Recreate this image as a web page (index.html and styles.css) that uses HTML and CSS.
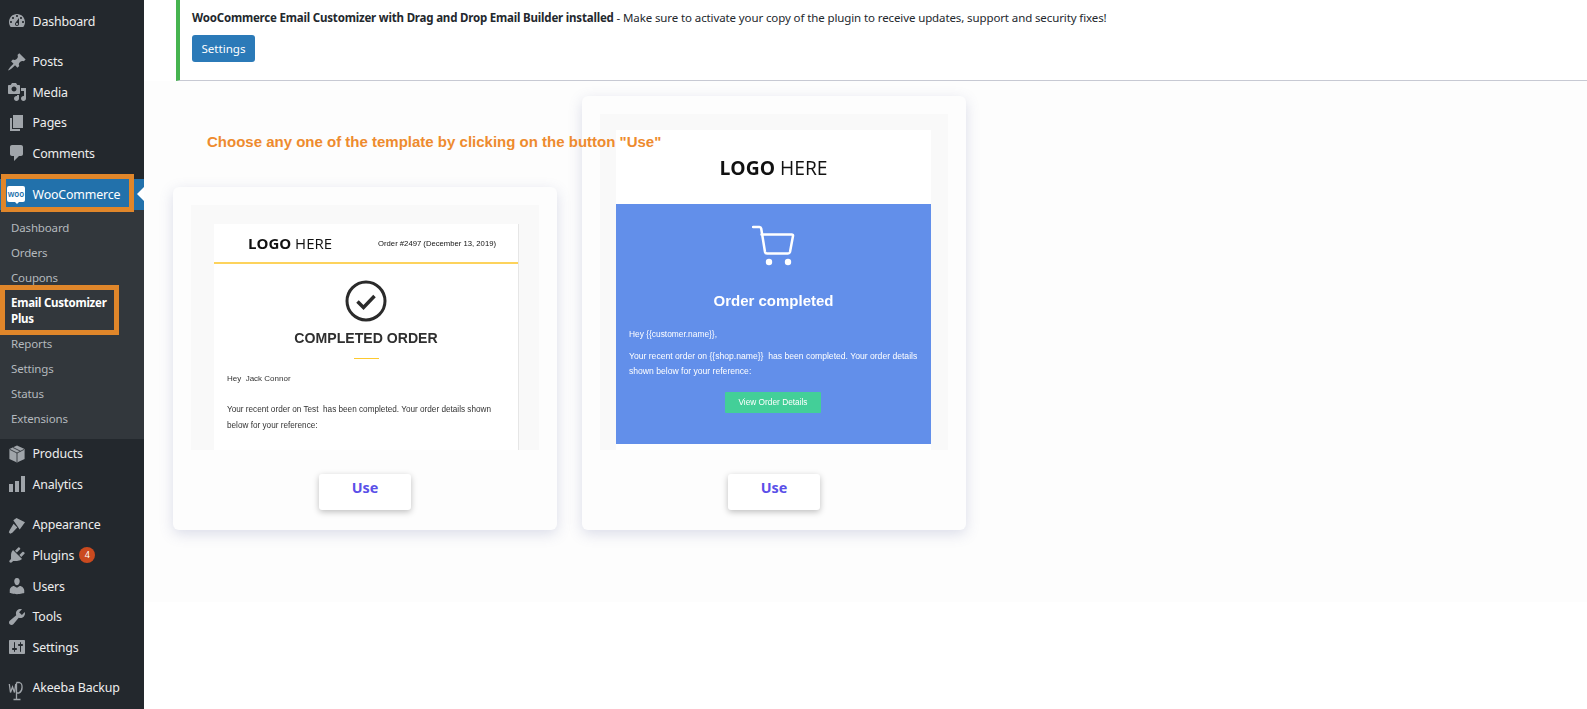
FILE: index.html
```html
<!DOCTYPE html>
<html lang="en">
<head>
    <meta charset="UTF-8">
    <meta name="viewport" content="width=device-width, initial-scale=1.0">
    <title>Email Customizer Plus</title>
    <link rel="stylesheet" href="styles.css">
</head>
<body>
    <div class="page">
        <!-- Admin sidebar -->
        <nav class="sidebar">
            <a class="menu-item"><svg class="icon" viewBox="0 0 20 20"><path d="M3.76 16h12.48c1.1-1.37 1.76-3.11 1.76-5 0-4.42-3.58-8-8-8s-8 3.58-8 8c0 1.89.66 3.63 1.76 5zM10 4c.55 0 1 .45 1 1s-.45 1-1 1-1-.45-1-1 .45-1 1-1zM6 6c.55 0 1 .45 1 1s-.45 1-1 1-1-.45-1-1 .45-1 1-1zm8 0c.55 0 1 .45 1 1s-.45 1-1 1-1-.45-1-1 .45-1 1-1zm-5.37 5.55L12 7v6c0 1.1-.9 2-2 2s-2-.9-2-2c0-.57.24-1.08.63-1.45zM4 10c.55 0 1 .45 1 1s-.45 1-1 1-1-.45-1-1 .45-1 1-1zm12 0c.55 0 1 .45 1 1s-.45 1-1 1-1-.45-1-1 .45-1 1-1zm-5 3c0-.55-.45-1-1-1s-1 .45-1 1 .45 1 1 1 1-.45 1-1z"/></svg>Dashboard</a>

            <a class="menu-item sep"><svg class="icon" viewBox="0 0 20 20"><path d="M10.44 3.02l1.82-1.82 6.36 6.35-1.83 1.82c-1.05-.68-2.48-.57-3.41.36l-.75.75c-.92.93-1.04 2.35-.35 3.41l-1.83 1.82-2.41-2.41-2.8 2.79c-.42.42-3.38 2.71-3.8 2.29s1.86-3.39 2.28-3.81l2.79-2.79L4.1 9.36l1.83-1.82c1.05.69 2.48.57 3.4-.36l.75-.75c.93-.92 1.05-2.35.36-3.41z"/></svg>Posts</a>
            <a class="menu-item"><svg class="icon" viewBox="0 0 20 20"><path d="M13 11V4c0-.55-.45-1-1-1h-1.67L9 1H5L3.67 3H2c-.55 0-1 .45-1 1v7c0 .55.45 1 1 1h10c.55 0 1-.45 1-1zM7 4.5c1.38 0 2.5 1.12 2.5 2.5S8.38 9.5 7 9.5 4.5 8.38 4.5 7 5.62 4.5 7 4.5zM14 6h5v10.5c0 1.38-1.12 2.5-2.5 2.5S14 17.88 14 16.5s1.12-2.5 2.5-2.5c.17 0 .34.02.5.05V9h-3V6zm-4 8.05V13h2v3.5c0 1.38-1.12 2.5-2.5 2.5S7 17.88 7 16.5 8.12 14 9.5 14c.17 0 .34.02.5.05z"/></svg>Media</a>
            <a class="menu-item"><svg class="icon" viewBox="0 0 20 20"><path d="M6 15V2h10v13H6zm-1 1h8v2H3V5h2v11z"/></svg>Pages</a>
            <a class="menu-item"><svg class="icon" viewBox="0 0 20 20"><path d="M5 2h9c1.1 0 2 .9 2 2v7c0 1.1-.9 2-2 2h-2l-5 5v-5H5c-1.1 0-2-.9-2-2V4c0-1.1.9-2 2-2z"/></svg>Comments</a>

            <a class="menu-item sep current">
                <span class="woo-icon">woo</span>WooCommerce
                <span class="mark mark-woo"></span>
                <span class="current-arrow"></span>
            </a>
            <div class="submenu">
                <a class="sub-item">Dashboard</a>
                <a class="sub-item">Orders</a>
                <a class="sub-item">Coupons</a>
                <a class="sub-item sub-active">Email Customizer Plus<span class="mark mark-email"></span></a>
                <a class="sub-item">Reports</a>
                <a class="sub-item">Settings</a>
                <a class="sub-item">Status</a>
                <a class="sub-item">Extensions</a>
            </div>

            <a class="menu-item"><svg class="icon" viewBox="0 0 20 20"><path d="M10 1.5l7.6 3.6v9.8L10 18.5l-7.6-3.6V5.1z"/><path class="icon-cut" d="M2.8 5.4L10 9l7.2-3.6M10 9v9M6 3.5l7.4 3.7"/></svg>Products</a>
            <a class="menu-item"><svg class="icon" viewBox="0 0 20 20"><path d="M18 18V2h-4v16h4zm-6 0V7H8v11h4zm-6 0v-8H2v8h4z"/></svg>Analytics</a>

            <a class="menu-item sep"><svg class="icon" viewBox="0 0 20 20"><path d="M6.3 5.2L9.5 3 18 7.300l-5.300 7.200zM6.600 8.800l3.700 3.700-5 5.200-2.100 1-1.400-1.400 1-2.200z"/></svg>Appearance</a>
            <a class="menu-item"><svg class="icon" viewBox="0 0 20 20"><path d="M13.11 4.36L9.87 7.6 8 5.73l3.24-3.24c.35-.34 1.05-.2 1.56.32.52.51.66 1.21.31 1.55zm-8 1.77l.91-1.12 9.01 9.01-1.19.84c-.71.71-2.63 1.16-3.82 1.16H6.14L4.9 17.26c-.59.59-1.54.59-2.12 0-.59-.58-.59-1.53 0-2.12l1.24-1.24v-3.88c0-1.13.4-3.07 1.09-3.89zm7.26 3.97l3.24-3.24c.34-.35 1.04-.21 1.55.31.52.51.66 1.21.31 1.55l-3.24 3.25z"/></svg>Plugins<span class="badge">4</span></a>
            <a class="menu-item"><svg class="icon" viewBox="0 0 20 20"><path d="M10 9.25c-2.27 0-2.73-3.44-2.73-3.44C7 4.02 7.82 2 9.97 2c2.16 0 2.98 2.02 2.71 3.81 0 0-.41 3.44-2.68 3.44zm0 2.57L12.72 10c2.39 0 4.52 2.33 4.52 4.53v2.49s-3.65 1.13-7.24 1.13c-3.65 0-7.24-1.13-7.24-1.13v-2.49c0-2.25 1.94-4.48 4.15-4.48z"/></svg>Users</a>
            <a class="menu-item"><svg class="icon" viewBox="0 0 20 20"><path d="M16.68 9.77c-1.34 1.34-3.3 1.67-4.95.99l-5.41 6.52c-.99.99-2.59.99-3.57 0-.99-.98-.99-2.58 0-3.57l6.52-5.42c-.68-1.65-.35-3.61.99-4.95 1.28-1.28 3.12-1.62 4.72-1.06l-2.89 2.89 2.82 2.82 2.86-2.87c.53 1.58.18 3.4-1.09 4.65z"/></svg>Tools</a>
            <a class="menu-item"><svg class="icon" viewBox="0 0 20 20"><path d="M18 16V4c0-.55-.45-1-1-1H3c-.55 0-1 .45-1 1v12c0 .55.45 1 1 1h14c.55 0 1-.45 1-1zM8 11h1c.55 0 1 .45 1 1s-.45 1-1 1H8v1.5c0 .28-.22.5-.5.5s-.5-.22-.5-.5V13H6c-.55 0-1-.45-1-1s.45-1 1-1h1V5.5c0-.28.22-.5.5-.5s.5.22.5.5V11zm5-2h-1c-.55 0-1-.45-1-1s.45-1 1-1h1V5.5c0-.28.22-.5.5-.5s.5.22.5.5V7h1c.55 0 1 .45 1 1s-.45 1-1 1h-1v5.5c0 .28-.22.5-.5.5s-.5-.22-.5-.5V9z"/></svg>Settings</a>

            <a class="menu-item sep"><svg class="icon icon-line" viewBox="0 0 20 20"><path d="M2.300 6l1.200 8.500 2-5.500 2 5.500L8.700 6M9.500 4.500h3c3.500 1 3.500 8.500-.5 10.500H9.500M9.500 4.500V21.500M6.500 21.500h7"/></svg>Akeeba Backup</a>
        </nav>

        <main class="main">
            <div class="notice">
                <p><strong>WooCommerce Email Customizer with Drag and Drop Email Builder installed</strong> - Make sure to activate your copy of the plugin to receive updates, support and security fixes!</p>
                <a class="btn-settings">Settings</a>
            </div>

            <div class="content">
                <div class="hint">Choose any one of the template by clicking on the button "Use"</div>

                <div class="card">
                    <div class="thumb thumb-short">
                        <div class="mail-a">
                            <div class="mail-a-head">
                                <span class="logo logo-small"><b>LOGO</b> HERE</span>
                                <span class="order-no">Order #2497 (December 13, 2019)</span>
                            </div>
                            <svg class="check" viewBox="0 0 42 42">
                                <circle cx="21" cy="21" r="19" fill="none" stroke="#2b2b2b" stroke-width="3"/>
                                <path d="M12.5 21.5l6 6 11-11.5" fill="none" stroke="#2b2b2b" stroke-width="3.5"/>
                            </svg>
                            <div class="mail-a-title">COMPLETED ORDER</div>
                            <div class="mail-a-rule"></div>
                            <p class="mail-a-hey">Hey&nbsp; Jack Connor</p>
                            <p class="mail-a-text">Your recent order on Test&nbsp; has been completed. Your order details shown below for your reference:</p>
                        </div>
                    </div>
                    <a class="btn-use">Use</a>
                </div>

                <div class="card">
                    <div class="thumb thumb-tall">
                        <div class="mail-b">
                            <div class="mail-b-head"><span class="logo logo-big"><b>LOGO</b> HERE</span></div>
                            <div class="mail-b-body">
                                <svg class="cart" viewBox="0 0 44 42">
                                    <path d="M1 2h6.5c1 0 1.5.5 1.7 1.5L13 27c.2 1 1 1.5 2 1.5h21c1 0 1.7-.5 2-1.5l3-16c.2-1-.3-1.5-1.3-1.5H9.5" fill="none" stroke="#fff" stroke-width="2.5" stroke-linecap="round"/>
                                    <circle cx="17" cy="37" r="3.2" fill="#fff"/>
                                    <circle cx="36" cy="37" r="3.2" fill="#fff"/>
                                </svg>
                                <div class="mail-b-title">Order completed</div>
                                <p class="mail-b-hey">Hey {{customer.name}},</p>
                                <p class="mail-b-text">Your recent order on {{shop.name}}&nbsp; has been completed. Your order details shown below for your reference:</p>
                                <div class="mail-b-btn">View Order Details</div>
                            </div>
                        </div>
                    </div>
                    <a class="btn-use">Use</a>
                </div>
            </div>
        </main>
    </div>
</body>
</html>
```

FILE: styles.css
```css
html, body {
    margin: 0;
    height: 100%;
    background: #fff;
    overflow: hidden;
}

body {
    font-family: "Noto Sans", Arial, sans-serif;
    font-size: 13px;
    color: #23282d;
}

.page {
    display: flex;
    height: 709px;
}

/* Sidebar */
.sidebar {
    flex: 0 0 144px;
    width: 144px;
    padding-top: 6px;
    background: #23282d;
    box-sizing: border-box;
}

.menu-item {
    position: relative;
    display: flex;
    align-items: center;
    height: 30.6px;
    padding: 0 0 .4px 7px;
    box-sizing: border-box;
    color: #eee;
    font-size: 12.4px;
    letter-spacing: -.15px;
}

.menu-item.sep {
    margin-top: 10px;
}

.menu-item.current {
    background: #2271ab;
    color: #fff;
}

.icon {
    flex: 0 0 20px;
    width: 20px;
    height: 20px;
    margin: 0 5.5px 0 0;
    overflow: visible;
    fill: #a0a5aa;
}

.icon-cut {
    fill: none;
    stroke: #23282d;
    stroke-width: .8;
}

.icon-line {
    fill: none;
    stroke: #a0a5aa;
    stroke-width: 1.3;
}

.woo-icon {
    position: relative;
    flex: 0 0 18px;
    width: 18px;
    height: 16px;
    margin-right: 7.5px;
    border-radius: 2px;
    background: #fff;
    color: #2271ab;
    font-size: 8px;
    font-weight: 600;
    letter-spacing: 0;
    line-height: 15px;
    text-align: center;
}

.woo-icon::after {
    content: "";
    position: absolute;
    left: 8px;
    bottom: -2px;
    border: 2px solid transparent;
    border-top-color: #fff;
    border-bottom-width: 0;
}

.current-arrow {
    position: absolute;
    right: 0;
    top: 8px;
    border: 7px solid transparent;
    border-right-color: #fff;
    border-left-width: 0;
}

.mark {
    position: absolute;
    box-sizing: border-box;
    border: 5px solid #e0862a;
}

.mark-woo {
    left: 1px;
    top: -5px;
    width: 133px;
    height: 38px;
}

.mark-email {
    left: 0;
    top: -5.5px;
    width: 119px;
    height: 50px;
}

.badge {
    width: 16px;
    height: 16px;
    margin-left: 5px;
    border-radius: 50%;
    background: #ca4a1f;
    color: #fff;
    font-size: 9px;
    letter-spacing: 0;
    line-height: 16px;
    text-align: center;
}

.submenu {
    padding: 5.5px 0 7.5px;
    background: #32373c;
}

.sub-item {
    position: relative;
    display: block;
    padding: 0 26px 0 11px;
    color: #b4b9be;
    font-size: 11.5px;
    letter-spacing: -.15px;
    line-height: 25px;
}

.sub-active {
    padding-top: 5px;
    padding-bottom: 4px;
    color: #fff;
    font-weight: 700;
    letter-spacing: -.25px;
    line-height: 16px;
}

/* Main column */
.main {
    flex: 1;
    min-width: 0;
}

.notice {
    height: 81px;
    margin-left: 32px;
    padding: 9px 12px 0;
    background: #fff;
    border-left: 4px solid #46b450;
    border-bottom: 1px solid #c7c9d3;
    box-sizing: border-box;
}

.notice p {
    margin: 0 0 8px;
    font-size: 11.5px;
    letter-spacing: -.11px;
    line-height: 18px;
}

.notice strong {
    letter-spacing: -.19px;
}

.btn-settings {
    display: inline-block;
    width: 63px;
    height: 27px;
    background: #2b7ab8;
    border-radius: 3px;
    color: #fff;
    font-size: 11.6px;
    line-height: 27px;
    text-align: center;
}

.content {
    position: relative;
    display: flex;
    align-items: flex-end;
    gap: 25px;
    padding: 15px 0 72px 29px;
    background: #fdfdfd;
}

.hint {
    position: absolute;
    z-index: 2;
    left: 63px;
    top: 51px;
    color: #ee8b2e;
    font-family: "Liberation Sans", Arial, sans-serif;
    font-size: 15px;
    font-weight: 700;
    line-height: 20px;
}

.card {
    width: 384px;
    padding: 18px 18px 20px;
    background: #fdfdfd;
    border-radius: 6px;
    box-shadow: 0 4px 14px rgba(95, 105, 160, .22);
    box-sizing: border-box;
    text-align: center;
}

.thumb {
    overflow: hidden;
    background: #f9f9f9;
    font-family: "Liberation Sans", Arial, sans-serif;
    text-align: left;
}

.thumb-short {
    height: 245px;
    padding: 19px 20px 0 23px;
    box-sizing: border-box;
}

.thumb-tall {
    height: 336px;
    padding: 16px 17px 0 16px;
    box-sizing: border-box;
}

.btn-use {
    display: block;
    width: 92px;
    height: 36px;
    margin: 24px auto 0;
    background: #fff;
    border-radius: 3px;
    box-shadow: 0 2px 6px rgba(0, 0, 0, .25);
    box-sizing: border-box;
    color: #5b50e8;
    font-size: 14.4px;
    font-weight: 700;
    line-height: 28px;
}

.logo {
    font-family: "Open Sans", sans-serif;
    color: #111;
}

.logo-small {
    font-size: 15px;
}

.logo-big {
    font-size: 19.3px;
}

/* First template preview */
.mail-a {
    height: 226px;
    background: #fff;
    border-right: 1px solid #e6e6e6;
    color: #333;
    filter: blur(.4px);
}

.mail-a-head {
    display: flex;
    justify-content: space-between;
    align-items: center;
    height: 38px;
    padding: 0 22px 0 34px;
    border-bottom: 2px solid #fdd35c;
}

.order-no {
    color: #111;
    font-size: 7.7px;
}

.check {
    display: block;
    width: 42px;
    height: 42px;
    margin: 16px auto 0;
}

.mail-a-title {
    margin-top: 7px;
    color: #2f2f2f;
    font-size: 14.1px;
    font-weight: 700;
    line-height: 18px;
    text-align: center;
}

.mail-a-rule {
    width: 25px;
    height: 1px;
    margin: 11px auto 0;
    background: #fdc92f;
}

.mail-a-hey {
    margin: 15px 0 0 13px;
    font-size: 8px;
    line-height: 10px;
}

.mail-a-text {
    margin: 18px 20px 0 13px;
    font-size: 8.2px;
    line-height: 16px;
}

/* Second template preview */
.mail-b {
    height: 320px;
    background: #fff;
    filter: blur(.4px);
}

.mail-b-head {
    height: 74px;
    line-height: 76px;
    text-align: center;
}

.mail-b-body {
    height: 240px;
    padding: 21px 5px 0 13px;
    background: #628fea;
    box-sizing: border-box;
    color: #fff;
}

.cart {
    display: block;
    width: 44px;
    height: 42px;
    margin: 0 auto;
    transform: translateX(-4px);
}

.mail-b-title {
    margin: 24px 8px 0 0;
    font-size: 15px;
    font-weight: 700;
    line-height: 20px;
    text-align: center;
}

.mail-b-hey {
    margin: 18px 0 0;
    font-size: 8.4px;
    line-height: 10px;
}

.mail-b-text {
    margin: 10px 0 0;
    font-size: 8.6px;
    line-height: 15px;
}

.mail-b-btn {
    width: 96px;
    height: 21px;
    margin: 13px 0 0 96px;
    background: #43cf98;
    border-radius: 1px;
    font-size: 8.3px;
    line-height: 20px;
    text-align: center;
}
```
